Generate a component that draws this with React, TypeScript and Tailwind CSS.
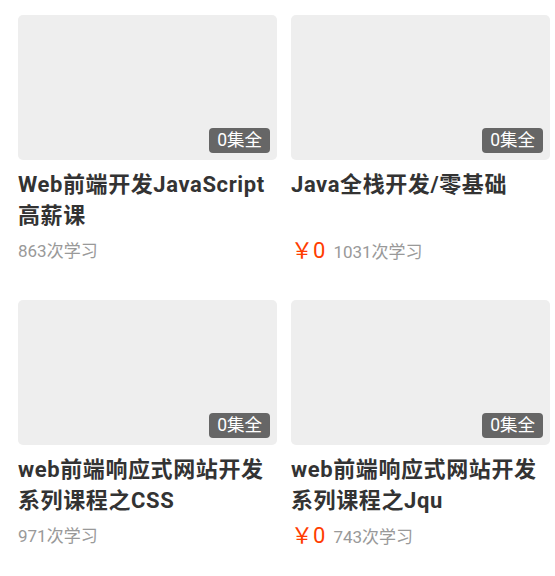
import React from "react";

type Course = { title: string; price?: boolean; count: string };

const courses: Course[] = [
  { title: "Web前端开发JavaScript高薪课", count: "863次学习" },
  { title: "Java全栈开发/零基础", price: true, count: "1031次学习" },
  { title: "web前端响应式网站开发系列课程之CSS", count: "971次学习" },
  { title: "web前端响应式网站开发系列课程之Jqu", price: true, count: "743次学习" },
];

function Card({ c }: { c: Course }) {
  return (
    <div className="flex flex-col h-[285px]">
      <div className="relative h-[145px] rounded-[5px] bg-[#eeeeee]">
        <span className="absolute right-[7px] bottom-[7px] h-[25px] px-[8px] rounded-[4px] bg-[#666666] text-white text-[17.5px] leading-[25px]">
          0集全
        </span>
      </div>
      <div className="mt-[9px] pr-[8px] h-[64px] overflow-hidden text-[22px] leading-[31px] tracking-[0.6px] font-bold text-[#333333]">
        {c.title}
      </div>
      <div className="mt-[7px] flex items-baseline h-[22px]">
        {c.price && (
          <span className="text-[#ff3d00] text-[22px] leading-[22px] mr-[8px]">￥0</span>
        )}
        <span className="text-[#999999] text-[17px] leading-[22px]">{c.count}</span>
      </div>
    </div>
  );
}

export default function App() {
  return (
    <div
      className="w-[555px] h-[576px] bg-white pt-[15px] pl-[18px] overflow-hidden"
      style={{ fontFamily: 'Roboto, "Noto Sans CJK SC", sans-serif' }}
    >
      <div className="grid grid-cols-[259px_259px] gap-x-[14px]">
        {courses.map((c, i) => (
          <Card key={i} c={c} />
        ))}
      </div>
    </div>
  );
}
